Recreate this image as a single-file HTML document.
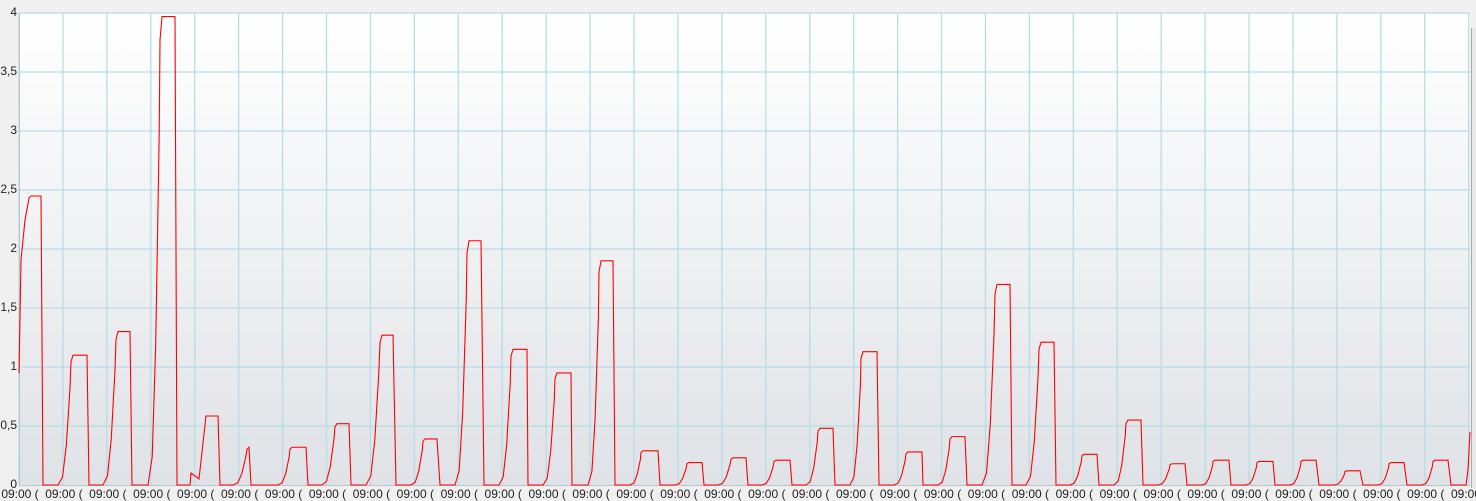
<!DOCTYPE html>
<html><head><meta charset="utf-8"><style>
html,body{margin:0;padding:0;background:#f0f0f0;width:1476px;height:501px;overflow:hidden;font-family:"Liberation Sans","DejaVu Sans",sans-serif;}
#wrap{position:absolute;left:0;top:0;width:1476px;height:501px;}
.yl{position:absolute;right:1459px;font-size:12px;color:#222;line-height:13px;}
#xl{position:absolute;left:0;top:486px;width:1476px;height:15px;overflow:hidden;}
.xl{position:absolute;top:1px;font-size:12px;color:#222;white-space:nowrap;width:44px;text-align:center;}
#sb{position:absolute;left:1471px;top:28px;width:5px;height:460px;border-left:1px solid #aaa;background:#e8e8e8;}
</style></head><body><div id="wrap">
<svg width="1476" height="501" style="position:absolute;left:0;top:0">
<defs><linearGradient id="g" x1="0" y1="0" x2="0" y2="1"><stop offset="0" stop-color="#ffffff"/><stop offset="1" stop-color="#dfe2e6"/></linearGradient></defs>
<rect x="19" y="13" width="1451" height="472" fill="url(#g)"/>
<g id="grid" stroke="#b5dde8" stroke-width="1.3"></g>
<line x1="19.5" y1="13" x2="19.5" y2="485" stroke="#b8c4cc"/>
<line x1="19" y1="485.5" x2="1470" y2="485.5" stroke="#b8c4cc"/>
<path id="d" fill="none" stroke="#ff0000" stroke-width="1.1"/>
</svg>
<div class="yl" style="top:6px">4</div>
<div class="yl" style="top:65px">3,5</div>
<div class="yl" style="top:124px">3</div>
<div class="yl" style="top:183px">2,5</div>
<div class="yl" style="top:242px">2</div>
<div class="yl" style="top:301px">1,5</div>
<div class="yl" style="top:360px">1</div>
<div class="yl" style="top:419px">0,5</div>
<div class="yl" style="top:478px">0</div>
<div id="xl"></div>
<div id="sb"></div>
</div>
<script>
var g=document.getElementById('grid'),s='',xl='';
for(var k=0;k<=33;k++){var x=19+k*43.93;s+='<line x1="'+x+'" y1="13" x2="'+x+'" y2="485"/>';xl+='<div class="xl" style="left:'+(x-21)+'px">09:00 (</div>';}
for(var v=1;v<=8;v++){var y=485-v*59;s+='<line x1="19" y1="'+y+'" x2="1470" y2="'+y+'"/>';}
g.innerHTML=s;document.getElementById('xl').innerHTML=xl;
var P=[[58,73,87,89,1.1],[103,118,130,132,1.3],[148,162,175,177,3.97],[233,249,249,251,0.32],[278,292,306,308,0.32],[322,337,349,351,0.52],[366,382,393,396,1.27],[411,425,437,440,0.39],[455,469,481,484,2.07],[499,513,527,528,1.15],[543,557,571,572,0.95],[588,601,613,615,1.9],[630,643,658,660,0.29],[675,689,702,704,0.19],[718,733,746,748,0.23],[762,776,790,792,0.21],[806,820,833,835,0.48],[850,863,877,879,1.13],[894,908,922,923,0.28],[938,952,965,967,0.41],[982,997,1010,1012,1.7],[1026,1041,1054,1056,1.21],[1070,1084,1097,1099,0.26],[1114,1128,1141,1143,0.55],[1158,1172,1185,1187,0.18],[1202,1215,1229,1231,0.21],[1246,1259,1273,1275,0.2],[1290,1303,1316,1319,0.21],[1334,1347,1360,1363,0.12],[1378,1391,1404,1407,0.19],[1422,1435,1448,1451,0.21]];
function Y(v){return 485-v*118;}
var d='M19,373 L21,260 L25,220 L29,198 L31,196 L41,196 L43,485';
for(var i=0;i<P.length;i++){var p=P[i],w=p[1]-p[0],h=p[4];
 if(i==3){d+=' L190,485 L191,473 L199,479 L206,416 L218,416 L220,485';}
 d+=' L'+p[0]+',485 L'+(p[0]+0.3*w)+','+Y(0.06*h)+' L'+(p[0]+0.55*w)+','+Y(0.3*h)+' L'+(p[0]+0.8*w)+','+Y(0.75*h)+' L'+(p[1]-2)+','+Y(0.95*h)+' L'+p[1]+','+Y(h)+' L'+p[2]+','+Y(h)+' L'+p[3]+',485';}
d+=' L1466,485 L1468,470 L1470,432';
document.getElementById('d').setAttribute('d',d);
</script>
</body></html>
